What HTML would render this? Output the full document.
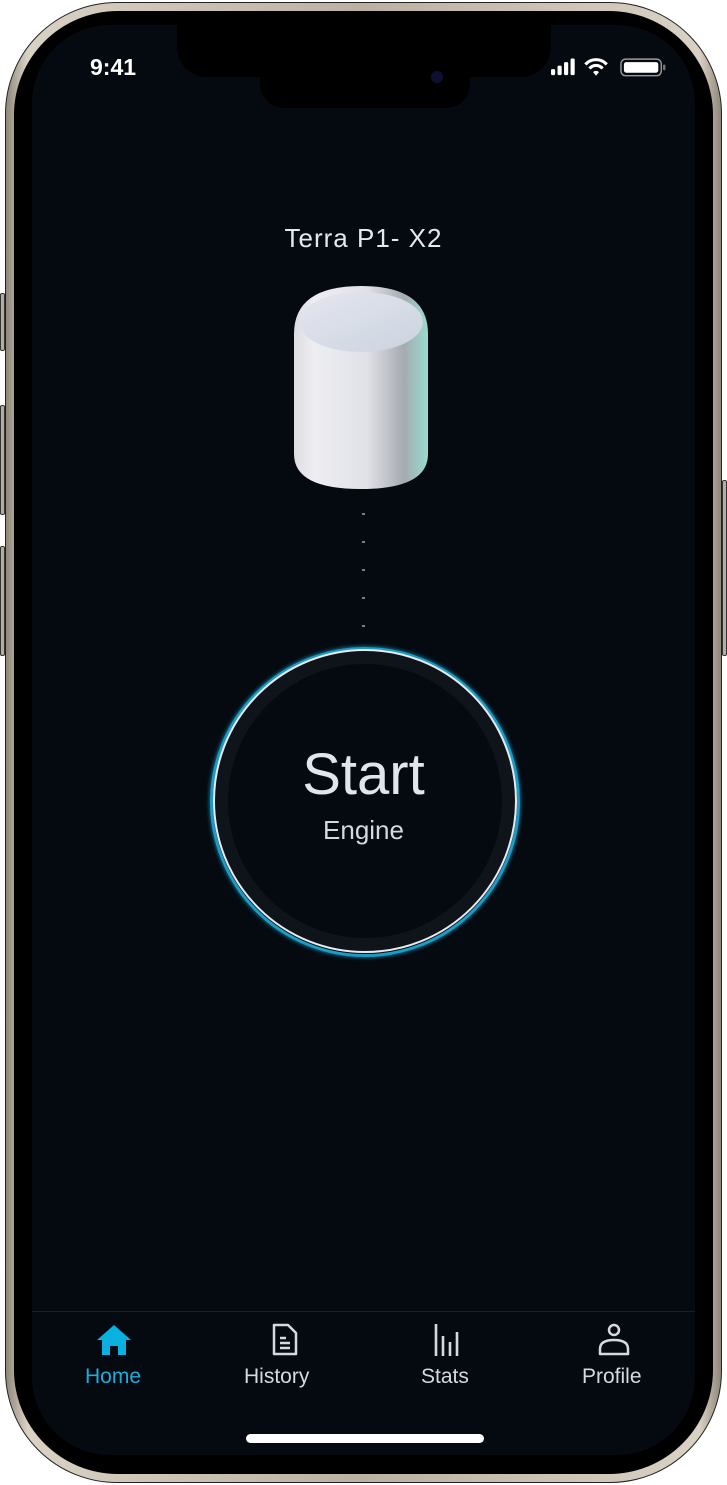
<!DOCTYPE html>
<html><head><meta charset="utf-8"><style>
*{margin:0;padding:0;box-sizing:border-box}
body{width:727px;height:1485px;background:#fff;position:relative;overflow:hidden;font-family:"Liberation Sans",sans-serif}
.btn{position:absolute;background:#b5ad9e;border:1px solid #333;border-radius:2px}
.frame{position:absolute;left:5px;top:2px;width:717px;height:1481px;border-radius:112px;background:linear-gradient(90deg,#8f877a,#d9d2c4 3%,#b9b1a2 50%,#d9d2c4 97%,#8f877a);border:1.5px solid #222}
.bezel{position:absolute;left:14px;top:11px;width:699px;height:1463px;border-radius:104px;background:#000}
.screen{position:absolute;left:32px;top:25px;width:663px;height:1430px;border-radius:78px;background:#050a11;overflow:hidden}
.notch{position:absolute;left:145px;top:0;width:374px;height:52px;background:#000;border-radius:0 0 30px 30px}
.island{position:absolute;left:228px;top:20px;width:210px;height:63px;background:#000;border-radius:24px}
.time{position:absolute;left:58px;top:29px;color:#fff;font-size:23px;font-weight:bold}
.t{position:absolute;color:#e6e8ee}
.lab{position:absolute;top:1340px;font-size:21px;color:#d6d9e0}
</style></head><body>
<div class="btn" style="left:0;top:293px;width:5px;height:58px"></div>
<div class="btn" style="left:0;top:405px;width:5px;height:110px"></div>
<div class="btn" style="left:0;top:546px;width:5px;height:110px"></div>
<div class="btn" style="left:722px;top:480px;width:5px;height:176px"></div>
<div class="frame"></div>
<div class="bezel"></div>
<div class="screen">
 <div class="notch"></div>
 <div class="island"></div>
 <div style="position:absolute;left:399px;top:46px;width:12px;height:12px;border-radius:50%;background:#0d1030"></div>
 <div class="time">9:41</div>
 <svg style="position:absolute;left:519px;top:31px" width="115" height="24" viewBox="0 0 97 20">
  <rect x="0" y="11" width="3.5" height="5" rx="1" fill="#fff"/><rect x="5.5" y="8" width="3.5" height="8" rx="1" fill="#fff"/><rect x="11" y="5" width="3.5" height="11" rx="1" fill="#fff"/><rect x="16.5" y="2" width="3.5" height="14" rx="1" fill="#fff"/>
  <path d="M29 7 A12 12 0 0 1 47 7" stroke="#fff" stroke-width="2.6" fill="none"/><path d="M32.5 10.5 A7 7 0 0 1 43.5 10.5" stroke="#fff" stroke-width="2.6" fill="none"/><path d="M35.5 13.5 L38 16.5 L40.5 13.5 A3.5 3.5 0 0 0 35.5 13.5Z" fill="#fff"/>
  <rect x="59" y="2.5" width="34" height="14" rx="4" stroke="#999" stroke-width="1.2" fill="none"/><rect x="61.5" y="5" width="29" height="9" rx="2" fill="#fff"/><rect x="94.5" y="7" width="2" height="5" rx="1" fill="#777"/>
 </svg>
 <div class="t" style="left:0;width:663px;text-align:center;top:198px;font-size:26px;letter-spacing:1px">Terra P1- X2</div>
 <svg style="position:absolute;left:260px;top:259px" width="142" height="208">
  <defs>
   <linearGradient id="b" x1="0" x2="1"><stop offset="0" stop-color="#dcdce3"/><stop offset=".15" stop-color="#eeeef2"/><stop offset=".55" stop-color="#e0e1e7"/><stop offset=".82" stop-color="#a6aab1"/><stop offset="1" stop-color="#98dccf"/></linearGradient>
   <linearGradient id="tp" x1="0" y1="0" x2="1" y2="1"><stop offset="0" stop-color="#e6e6f0"/><stop offset="1" stop-color="#c9d3de"/></linearGradient>
  </defs>
  <path d="M2 50 Q2 2 69 2 Q136 2 136 50 L136 170 Q136 205 69 205 Q2 205 2 170Z" fill="url(#b)"/>
  <ellipse cx="69" cy="38" rx="62" ry="30" fill="url(#tp)"/>
 </svg>
 <div style="position:absolute;left:330px;top:488px;width:3px;height:120px;background:repeating-linear-gradient(#7a7f88 0 2px,transparent 2px 28px)"></div>
 <div style="position:absolute;left:178px;top:622px;width:310px;height:310px;border-radius:50%;border:3px solid #1a9cc4;box-shadow:0 0 4px #1a9cc4"></div>
 <div style="position:absolute;left:181px;top:624px;width:304px;height:304px;border-radius:50%;border:2px solid #e8eaf0;background:#0f141b"></div>
 <div style="position:absolute;left:196px;top:639px;width:274px;height:274px;border-radius:50%;background:#050a11"></div>
 <div class="t" style="left:0;width:663px;text-align:center;top:716px;font-size:58px;color:#e2e5ee">Start</div>
 <div class="t" style="left:0;width:663px;text-align:center;top:790px;font-size:26px;color:#d4d8e0">Engine</div>
 <div style="position:absolute;left:0;top:1286px;width:663px;height:1px;background:#1b1f25"></div>
 <svg style="position:absolute;left:64px;top:1298px" width="36" height="34" viewBox="0 0 36 34"><path d="M18 2 L35 17 L30 17 L30 32 L22 32 L22 23 L14 23 L14 32 L6 32 L6 17 L1 17Z" fill="#09b1e0"/></svg>
 <div class="lab" style="left:53px;color:#19aedb">Home</div>
 <svg style="position:absolute;left:238px;top:1298px" width="30" height="34" viewBox="0 0 30 34"><path d="M4 2 H18 L26 10 V31 H4Z" stroke="#d6d9e0" stroke-width="2.5" fill="none" stroke-linejoin="round"/><path d="M10 15h6M10 20h10M10 25h10" stroke="#d6d9e0" stroke-width="2.5"/></svg>
 <div class="lab" style="left:212px">History</div>
 <svg style="position:absolute;left:400px;top:1297px" width="30" height="36"><path d="M4 2v32M11 14v20M18 20v14M25 10v24" stroke="#d6d9e0" stroke-width="2.6"/></svg>
 <div class="lab" style="left:389px">Stats</div>
 <svg style="position:absolute;left:565px;top:1297px" width="34" height="36"><circle cx="17" cy="8" r="5" stroke="#d6d9e0" stroke-width="2.5" fill="none"/><path d="M3 32 V27 Q3 18 17 18 Q31 18 31 27 V32Z" stroke="#d6d9e0" stroke-width="2.5" fill="none" stroke-linejoin="round"/></svg>
 <div class="lab" style="left:550px">Profile</div>
 <div style="position:absolute;left:214px;top:1409px;width:238px;height:9px;border-radius:5px;background:#fff"></div>
</div>
</body></html>
